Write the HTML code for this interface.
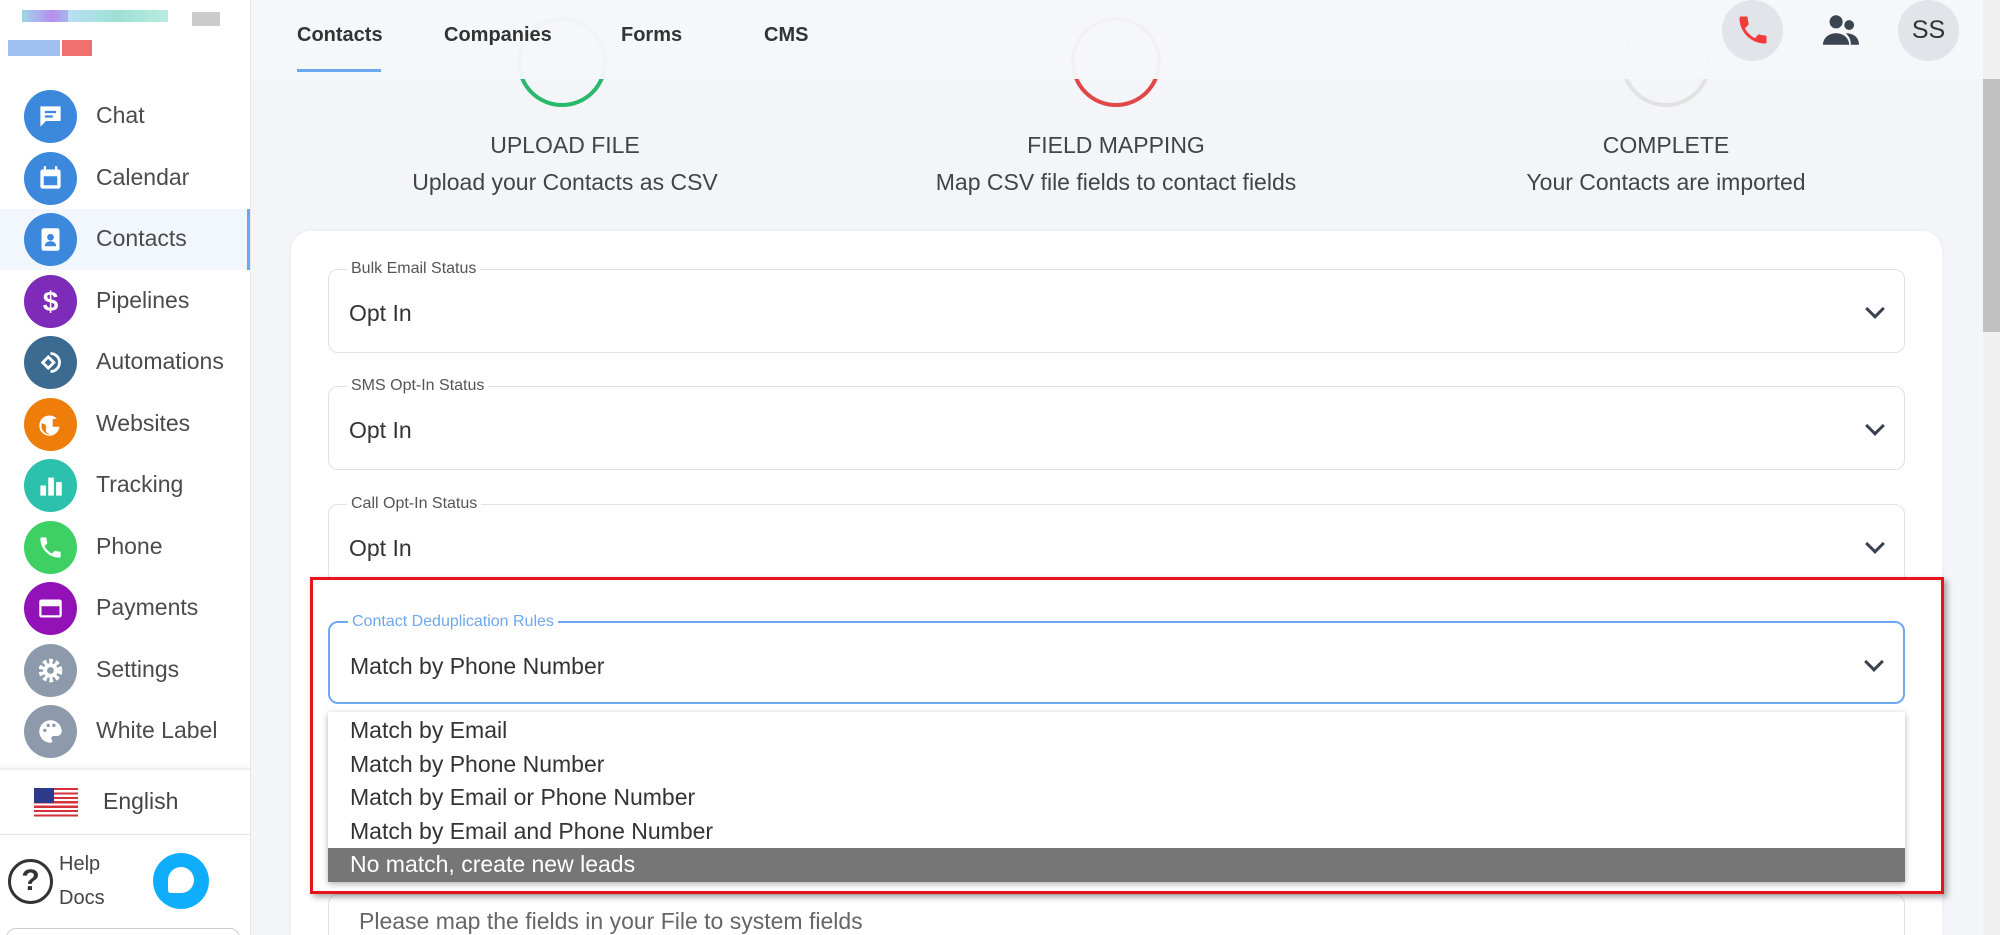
<!DOCTYPE html>
<html><head><meta charset="utf-8"><style>
*{box-sizing:border-box;margin:0;padding:0}
html{width:2000px;height:935px;overflow:hidden}
body{width:2000px;height:935px;overflow:hidden;background:#f3f5f8;font-family:"Liberation Sans",sans-serif;position:relative;color:#333}
.abs{position:absolute}
.side{left:0;top:0;width:251px;height:935px;background:#fff;border-right:1px solid #e5e7eb;overflow:hidden}
.item{position:absolute;left:0;width:251px;height:61px}
.item .ic{position:absolute;left:24px;top:4px;width:53px;height:53px;border-radius:50%;color:#fff;text-align:center;font-weight:bold;font-size:28px;line-height:53px}
.item .ic svg{position:absolute;left:13px;top:13px}
.item span{position:absolute;left:96px;top:16px;font-size:23px;color:#4b4b4b}
.fld{position:absolute;left:328px;width:1577px;height:84px;border:1.5px solid #dfe2e6;border-radius:10px;background:#fff}
.fld .lb{position:absolute;left:18px;top:-10px;background:#fff;padding:0 4px;font-size:16px;color:#555}
.fld .v{position:absolute;left:20px;top:30px;font-size:23px;color:#333}
.chev{position:absolute;right:22px;top:32px;width:14px;height:14px;border-right:3px solid #3a4150;border-bottom:3px solid #3a4150;transform:rotate(45deg)}
.opt{position:absolute;left:0;width:100%;height:33.5px;font-size:23px;color:#333;padding-left:22px;line-height:33px}
</style></head><body>
<div class="abs" style="left:517px;top:17px;width:90px;height:90px;border-radius:50%;border:4px solid #2ab86a"></div>
<div class="abs" style="left:1071px;top:17px;width:90px;height:90px;border-radius:50%;border:4px solid #e04848"></div>
<div class="abs" style="left:1621px;top:17px;width:90px;height:90px;border-radius:50%;border:4px solid #e2e2e2"></div>
<div class="abs" style="left:252px;top:0;width:1731px;height:79px;background:rgba(245,247,250,.97)"></div>
<div class="abs" style="left:297px;top:24px;font-size:20px;font-weight:bold;color:#333">Contacts</div>
<div class="abs" style="left:297px;top:69px;width:84px;height:3px;background:#6aa8f0"></div>
<div class="abs" style="left:444px;top:24px;font-size:20px;font-weight:bold;color:#333">Companies</div>
<div class="abs" style="left:621px;top:24px;font-size:20px;font-weight:bold;color:#333">Forms</div>
<div class="abs" style="left:764px;top:24px;font-size:20px;font-weight:bold;color:#333">CMS</div>
<div class="abs" style="left:1722px;top:0;width:61px;height:61px;border-radius:50%;background:#e1e4e9"></div>
<svg class="abs" style="left:1735px;top:10px" width="36" height="40" viewBox="0 0 24 24"><path fill="#f23b3b" d="M6.6 10.8c1.4 2.8 3.8 5.1 6.6 6.6l2.2-2.2c.3-.3.7-.4 1-.2 1.1.4 2.3.6 3.6.6.6 0 1 .4 1 1V20c0 .6-.4 1-1 1C10.6 21 3 13.4 3 4c0-.6.4-1 1-1h3.5c.6 0 1 .4 1 1 0 1.3.2 2.5.6 3.6.1.3 0 .7-.2 1z"/></svg>
<svg class="abs" style="left:1821px;top:12px" width="40" height="36" viewBox="0 0 24 22"><circle cx="9" cy="6" r="4" fill="#3b4452"/><circle cx="17" cy="8" r="3" fill="#3b4452"/><path fill="#3b4452" d="M1 20c0-4 3.5-7 8-7s8 3 8 7zM15 13c4 0 8 2 8 7h-5c0-3-1-5-3-7z"/></svg>
<div class="abs" style="left:1898px;top:0;width:61px;height:61px;border-radius:50%;background:#e1e4e9;font-size:25px;color:#333;text-align:center;line-height:61px">SS</div>
<div class="abs" style="left:1983px;top:0;width:17px;height:935px;background:#f0f0f0"></div>
<div class="abs" style="left:1983px;top:79px;width:17px;height:253px;background:#c1c1c1"></div>
<div class="abs" style="left:365px;top:132px;width:400px;text-align:center;font-size:23px;color:#444">UPLOAD FILE</div>
<div class="abs" style="left:365px;top:169px;width:400px;text-align:center;font-size:23px;color:#444">Upload your Contacts as CSV</div>
<div class="abs" style="left:866px;top:132px;width:500px;text-align:center;font-size:23px;color:#444">FIELD MAPPING</div>
<div class="abs" style="left:866px;top:169px;width:500px;text-align:center;font-size:23px;color:#444">Map CSV file fields to contact fields</div>
<div class="abs" style="left:1466px;top:132px;width:400px;text-align:center;font-size:23px;color:#444">COMPLETE</div>
<div class="abs" style="left:1466px;top:169px;width:400px;text-align:center;font-size:23px;color:#444">Your Contacts are imported</div>
<div class="abs" style="left:291px;top:231px;width:1651px;height:704px;background:#fff;border-radius:20px 20px 0 0;box-shadow:0 0 6px rgba(0,0,0,.05)"></div>
<div class="fld" style="top:269px"><div class="lb">Bulk Email Status</div><div class="v">Opt In</div><div class="chev"></div></div>
<div class="fld" style="top:386px"><div class="lb">SMS Opt-In Status</div><div class="v">Opt In</div><div class="chev"></div></div>
<div class="fld" style="top:504px"><div class="lb">Call Opt-In Status</div><div class="v">Opt In</div><div class="chev"></div></div>
<div class="fld" style="top:894px;height:41px;border-bottom:none;border-radius:10px 10px 0 0"><div class="v" style="left:30px;top:13px;color:#666">Please map the fields in your File to system fields</div></div>
<div class="abs" style="left:310px;top:577px;width:1634px;height:317px;background:#fff;border:3px solid #e8141c;box-shadow:3px 3px 6px rgba(0,0,0,.35)"></div>
<div class="fld" style="top:621px;left:328px;height:83px;border:2px solid #6ea8ef"><div class="lb" style="color:#6ea8ef">Contact Deduplication Rules</div><div class="v">Match by Phone Number</div><div class="chev"></div></div>
<div class="abs" style="left:328px;top:712px;width:1577px;height:170px;background:#fff;box-shadow:0 2px 6px rgba(0,0,0,.3)">
<div class="opt" style="top:2px">Match by Email</div>
<div class="opt" style="top:35.5px">Match by Phone Number</div>
<div class="opt" style="top:69px">Match by Email or Phone Number</div>
<div class="opt" style="top:102.5px">Match by Email and Phone Number</div>
<div class="opt" style="top:136px;background:#767676;color:#fff">No match, create new leads</div>
</div>
<div class="abs side">
<div class="abs" style="left:22px;top:10px;width:60px;height:12px;background:linear-gradient(90deg,#9ed6e8,#b68ef0,#9ed6e8)"></div>
<div class="abs" style="left:68px;top:10px;width:100px;height:12px;background:linear-gradient(90deg,#b8dff5,#9fe0d4,#b9ece0)"></div>
<div class="abs" style="left:192px;top:12px;width:28px;height:14px;background:#ccc"></div>
<div class="abs" style="left:8px;top:40px;width:52px;height:16px;background:#9fc0f0"></div>
<div class="abs" style="left:62px;top:40px;width:30px;height:16px;background:#f07070"></div>
<div class="item" style="top:86px"><div class="ic" style="background:#3b88dc"><svg width="27" height="27" viewBox="0 0 24 24"><path fill="#fff" d="M3 3h18v13H8l-5 5z"/><path stroke="#3b88dc" stroke-width="2" d="M7 8h10M7 12h7"/></svg></div><span>Chat</span></div>
<div class="item" style="top:148px"><div class="ic" style="background:#3b88dc"><svg width="27" height="27" viewBox="0 0 24 24"><rect x="3" y="4" width="18" height="17" rx="2" fill="#fff"/><rect x="6" y="10" width="12" height="8" fill="#3b88dc"/><path stroke="#fff" stroke-width="2" d="M7 1v5M17 1v5"/></svg></div><span>Calendar</span></div>
<div class="item" style="top:209px;background:#f2f7fd"><div class="ic" style="background:#3b88dc"><svg width="27" height="27" viewBox="0 0 24 24"><rect x="4" y="2" width="16" height="20" rx="2" fill="#fff"/><circle cx="12" cy="10" r="3" fill="#3b88dc"/><path fill="#3b88dc" d="M7 18c0-3 2-4.5 5-4.5s5 1.5 5 4.5z"/></svg></div><span>Contacts</span><div class="abs" style="right:0;top:0;width:4px;height:61px;background:#6aa8f0"></div></div>
<div class="item" style="top:271px"><div class="ic" style="background:#7d2bb8">$</div><span>Pipelines</span></div>
<div class="item" style="top:332px"><div class="ic" style="background:#3c6b91"><svg width="27" height="27" viewBox="0 0 24 24" fill="none" stroke="#fff" stroke-width="2.5"><path d="M5 12l5-5 5 5-5 5z"/><path d="M12 4a8 8 0 1 1 0 16"/></svg></div><span>Automations</span></div>
<div class="item" style="top:394px"><div class="ic" style="background:#ee7d0a"><svg width="27" height="27" viewBox="0 0 24 24"><circle cx="11" cy="13" r="9" fill="#fff"/><path fill="#ee7d0a" d="M4 11c3 0 5 2 4 5s2 4 4 5c-4 0-7-3-8-6zM14 7h8v7h-8z"/></svg></div><span>Websites</span></div>
<div class="item" style="top:455px"><div class="ic" style="background:#2cc1ad"><svg width="27" height="27" viewBox="0 0 24 24" fill="#fff"><rect x="3" y="12" width="5" height="9"/><rect x="10" y="5" width="5" height="16"/><rect x="17" y="9" width="5" height="12"/></svg></div><span>Tracking</span></div>
<div class="item" style="top:517px"><div class="ic" style="background:#3fd063"><svg width="27" height="27" viewBox="0 0 24 24"><path fill="#fff" d="M6.6 10.8c1.4 2.8 3.8 5.1 6.6 6.6l2.2-2.2c.3-.3.7-.4 1-.2 1.1.4 2.3.6 3.6.6.6 0 1 .4 1 1V20c0 .6-.4 1-1 1C10.6 21 3 13.4 3 4c0-.6.4-1 1-1h3.5c.6 0 1 .4 1 1 0 1.3.2 2.5.6 3.6.1.3 0 .7-.2 1z"/></svg></div><span>Phone</span></div>
<div class="item" style="top:578px"><div class="ic" style="background:#9212b8"><svg width="27" height="27" viewBox="0 0 24 24"><rect x="2" y="4" width="20" height="16" rx="2" fill="#fff"/><rect x="4" y="10" width="16" height="8" fill="#9212b8"/></svg></div><span>Payments</span></div>
<div class="item" style="top:640px"><div class="ic" style="background:#8d9aab"><svg width="27" height="27" viewBox="0 0 24 24"><circle cx="12" cy="12" r="8" fill="none" stroke="#fff" stroke-width="5" stroke-dasharray="3 2.2"/><circle cx="12" cy="12" r="6.5" fill="#fff"/><circle cx="12" cy="12" r="3" fill="#8d9aab"/></svg></div><span>Settings</span></div>
<div class="item" style="top:701px"><div class="ic" style="background:#8d9aab"><svg width="27" height="27" viewBox="0 0 24 24"><path fill="#fff" d="M12 2a10 10 0 0 0 0 20c2 0 2-2 1-3s0-3 2-3h3c2 0 4-2 4-4 0-6-5-10-10-10z"/><circle cx="7" cy="11" r="1.5" fill="#8d9aab"/><circle cx="10" cy="6.5" r="1.5" fill="#8d9aab"/><circle cx="15" cy="6.5" r="1.5" fill="#8d9aab"/></svg></div><span>White Label</span></div>
<div class="abs" style="left:0;top:768px;width:251px;height:2px;background:#eee;box-shadow:0 -2px 4px rgba(0,0,0,.08)"></div>
<div class="abs" style="left:34px;top:788px;width:44px;height:29px;background:repeating-linear-gradient(#d6303a 0 2.2px,#fff 2.2px 4.4px)"></div>
<div class="abs" style="left:34px;top:788px;width:20px;height:15px;background:#2d3a8c"></div>
<div class="abs" style="left:103px;top:788px;font-size:23px;color:#444">English</div>
<div class="abs" style="left:0;top:834px;width:251px;height:1px;background:#e3e3e3"></div>
<div class="abs" style="left:8px;top:859px;width:45px;height:45px;border-radius:50%;border:3px solid #333;text-align:center;font-size:30px;font-weight:bold;line-height:38px;color:#333">?</div>
<div class="abs" style="left:59px;top:853px;font-size:20px;color:#444">Help</div>
<div class="abs" style="left:59px;top:887px;font-size:20px;color:#444">Docs</div>
<div class="abs" style="left:153px;top:853px;width:56px;height:56px;border-radius:50%;background:#0eaefc"></div>
<div class="abs" style="left:168px;top:867px;width:26px;height:26px;border-radius:50% 50% 50% 10%;background:#fff"></div>
<div class="abs" style="left:6px;top:928px;width:234px;height:20px;border:1px solid #ccc;border-radius:10px"></div>
</div>
</body></html>
